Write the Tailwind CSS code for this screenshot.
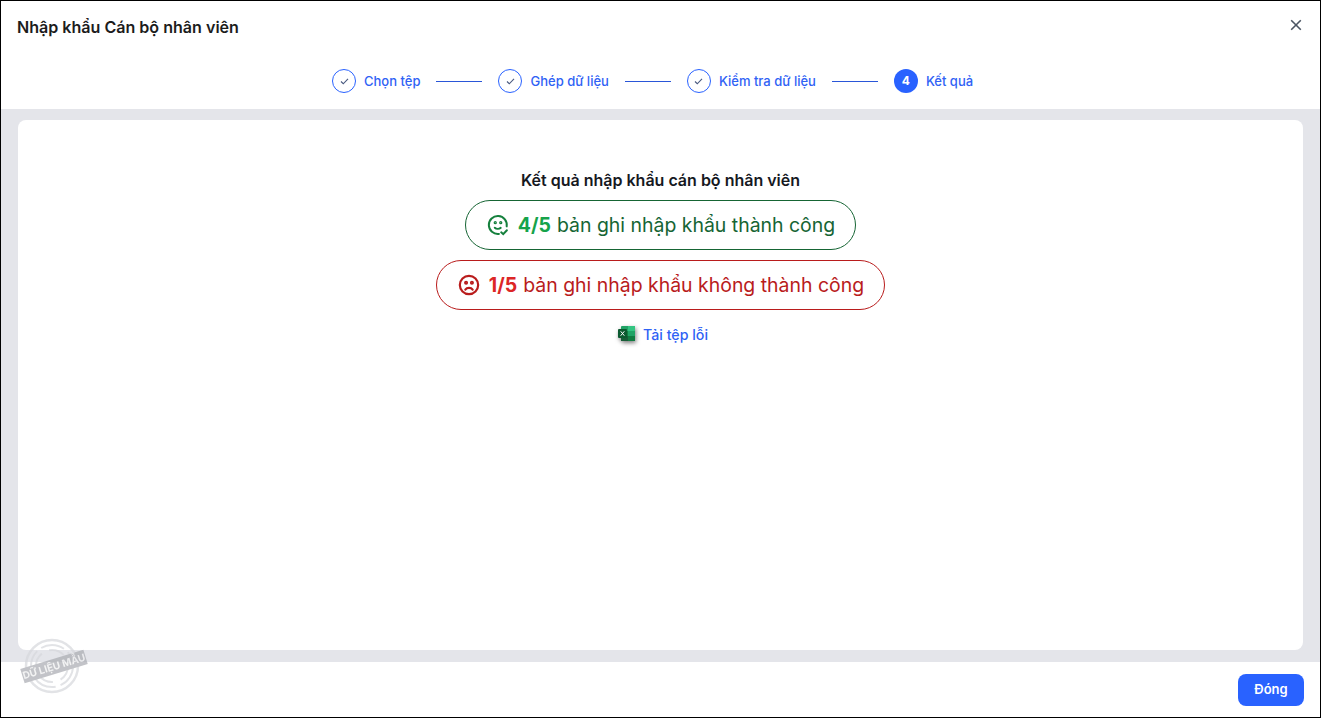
<!DOCTYPE html>
<html lang="vi">
<head>
<meta charset="UTF-8">
<title>Nhập khẩu Cán bộ nhân viên</title>
<script src="https://cdn.jsdelivr.net/npm/@tailwindcss/browser@4"></script>
</head>
<body class="bg-white font-['Inter',sans-serif]">
<div class="relative w-[1321px] h-[718px] border border-black flex flex-col overflow-hidden bg-white">

  <!-- header -->
  <div class="h-[108px] shrink-0 relative">
    <div class="pl-4 pt-[16px] text-[16.07px] leading-[20px] font-semibold text-[#1c1c1c]">Nhập khẩu Cán bộ nhân viên</div>
    <button class="absolute right-[17px] top-[17px] w-[14px] h-[14px] text-[#4b5563]">
      <svg viewBox="0 0 14 14" class="w-[14px] h-[14px]" fill="none" stroke="currentColor" stroke-width="1.6"><path d="M2.2 2.2l9.6 9.6M11.8 2.2l-9.6 9.6"/></svg>
    </button>
    <div class="absolute left-[331px] top-[68px] flex items-center text-[13px] leading-[24px] font-medium text-[#2f62f5]">
      <span class="w-6 h-6 rounded-full border border-[#2962ff] flex items-center justify-center">
        <svg viewBox="0 0 10 8" class="w-[9px] h-[7px]" fill="none" stroke="#4a5a80" stroke-width="1.3"><path d="M1 4l2.6 2.6L9 1"/></svg>
      </span>
      <span class="ml-2">Chọn tệp</span>
      <span class="ml-4 w-[46px] h-px bg-[#2a56d8]"></span>
      <span class="ml-4 w-6 h-6 rounded-full border border-[#2962ff] flex items-center justify-center">
        <svg viewBox="0 0 10 8" class="w-[9px] h-[7px]" fill="none" stroke="#4a5a80" stroke-width="1.3"><path d="M1 4l2.6 2.6L9 1"/></svg>
      </span>
      <span class="ml-2">Ghép dữ liệu</span>
      <span class="ml-4 w-[46px] h-px bg-[#2a56d8]"></span>
      <span class="ml-4 w-6 h-6 rounded-full border border-[#2962ff] flex items-center justify-center">
        <svg viewBox="0 0 10 8" class="w-[9px] h-[7px]" fill="none" stroke="#4a5a80" stroke-width="1.3"><path d="M1 4l2.6 2.6L9 1"/></svg>
      </span>
      <span class="ml-2">Kiểm tra dữ liệu</span>
      <span class="ml-4 w-[46px] h-px bg-[#2a56d8]"></span>
      <span class="ml-4 w-6 h-6 rounded-full bg-[#2962ff] text-white text-[12px] font-bold flex items-center justify-center">4</span>
      <span class="ml-2">Kết quả</span>
    </div>
  </div>

  <!-- body -->
  <div class="h-[553px] shrink-0 bg-[#e4e5ea] pt-[11px] pl-[17px] pr-[17px]">
    <div class="h-[530px] bg-white rounded-lg flex flex-col items-center pt-[50px]">
      <div class="text-[16px] leading-[20px] font-semibold text-[#16191f]">Kết quả nhập khẩu cán bộ nhân viên</div>
      <div class="mt-[10px] h-[50px] pl-[21px] pr-5 rounded-[25px] border border-[#166534] flex items-center text-[19.45px] text-[#166534]">
        <svg viewBox="0 0 24 24" class="w-[22px] h-[22px] mr-[9px]" fill="none" stroke="#15803d" stroke-width="2.2" stroke-linecap="round"><path d="M21.5 13.5A9.8 9.8 0 1 0 13 21.7"/><path d="M8.5 15c1.6 1.4 4.6 1.5 6.4.2"/><path d="M15.5 20l2.2 2 4-4.2"/><circle cx="9" cy="9.5" r=".7"/><circle cx="15" cy="9.5" r=".7"/></svg>
        <span class="pt-px"><span class="font-bold text-[#16a34a] mr-[6px]">4/5</span>bản ghi nhập khẩu thành công</span>
      </div>
      <div class="mt-[10px] h-[50px] pl-[21px] pr-5 rounded-[25px] border border-[#b91c1c] flex items-center text-[19.45px] text-[#b91c1c]">
        <svg viewBox="0 0 24 24" class="w-[22px] h-[22px] mr-[9px]" fill="none" stroke="#b91c1c" stroke-width="2.4" stroke-linecap="round"><circle cx="12" cy="12" r="10"/><path d="M8 17c1.8-2.6 6.2-2.6 8 0"/><circle cx="8.8" cy="9.6" r="1"/><circle cx="15.2" cy="9.6" r="1"/></svg>
        <span class="pt-px"><span class="font-bold text-[#dc2626] mr-[6px]">1/5</span>bản ghi nhập khẩu không thành công</span>
      </div>
      <div class="mt-[13px] flex items-center text-[14.2px] leading-[24px] font-medium text-[#2f62f5]">
        <svg viewBox="0 0 24 24" class="w-6 h-6 mr-[6px] drop-shadow-[1px_2px_2px_rgba(0,0,0,0.5)]">
          <rect x="8" y="3" width="14" height="15" rx="1" fill="#21a366"/>
          <rect x="15" y="3" width="7" height="5" fill="#33c481"/>
          <rect x="8" y="8" width="7" height="5" fill="#107c41"/>
          <rect x="15" y="13" width="7" height="5" fill="#107c41"/>
          <rect x="8" y="13" width="7" height="5" fill="#185c37"/>
          <rect x="5" y="6" width="9" height="9" rx="1" fill="#0b5a30"/>
          <path d="M7.7 8.3l3.6 4.4M11.3 8.3l-3.6 4.4" stroke="#fff" stroke-width="1"/>
        </svg>
        Tải tệp lỗi
      </div>
    </div>
  </div>

  <!-- footer -->
  <div class="flex-1 flex items-start justify-end pt-3 pr-4">
    <button class="w-[66px] h-8 rounded-lg bg-[#2962ff] text-white text-[13px] font-semibold">Đóng</button>
  </div>

  <!-- sample data stamp -->
  <div class="absolute left-[18px] top-[637px] w-[70px] h-[56px] opacity-70 blur-[0.5px] pointer-events-none">
    <svg viewBox="0 0 70 56" class="w-[70px] h-[56px]" fill="none" stroke="#d6d8dc">
      <circle cx="33" cy="28" r="26" stroke-width="2.5"/>
      <circle cx="33" cy="28" r="21" stroke-width="2" stroke-dasharray="24 5"/>
      <circle cx="33" cy="28" r="16" stroke-width="2" stroke-dasharray="16 8"/>
    </svg>
    <div class="absolute left-[2px] top-[21px] w-[66px] h-[15px] bg-[#a9abb1] -rotate-[17deg] text-white/80 text-[10px] leading-[15px] font-bold text-center whitespace-nowrap">DỮ LIỆU MẪU</div>
  </div>
</div>
</body>
</html>
